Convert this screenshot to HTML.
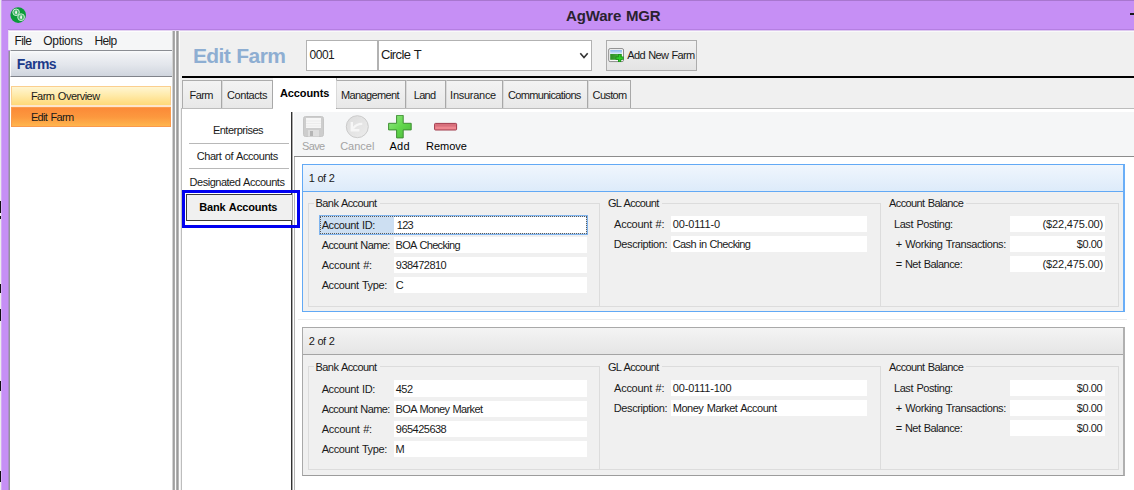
<!DOCTYPE html>
<html lang="en">
<head>
<meta charset="utf-8">
<title>AgWare MGR</title>
<style>
*{box-sizing:border-box;margin:0;padding:0}
html,body{width:1134px;height:490px;overflow:hidden;background:#fff}
body{font-family:"Liberation Sans",sans-serif;font-size:11px;color:#1a1a1a;position:relative}
.a{position:absolute;white-space:nowrap}
.t{position:absolute;white-space:nowrap}
#win{left:0;top:0;width:1134px;height:490px;background:#c68ff5}
#wtop{left:0;top:0;width:1134px;height:1px;background:#a876cf}
#wleft{left:0;top:0;width:2px;height:490px;background:linear-gradient(90deg,#ececec 50%,#d3aaf6 50%)}
#tbot{left:8px;top:29px;width:1126px;height:1px;background:#b57fe2}
#min{left:1130px;top:13px;width:4px;height:2px;background:#1a1a1a}
#lp{left:8px;top:51px;width:165px;height:439px;background:#fff;border-left:1px solid #ab8ccb}
#lpb{left:9px;top:51px;width:1px;height:439px;background:#94949a}
#menu{left:8px;top:30px;width:165px;height:20px;background:#f5f6f7;border-top:1px solid #e3d2f2;border-left:1px solid #e9def3}
#menu2{left:9px;top:31px;width:164px;height:1px;background:#fdfdfd}
#fh{left:10px;top:50px;width:163px;height:27px;border-top:1px solid #8a8d93;border-bottom:1px solid #80838a;border-left:1px solid #fbfbfc;background:linear-gradient(#fafbfc,#f0f2f5 12%,#e3e6ec 55%,#d0d5de)}
.nav{left:11px;width:160px}
#n1{top:86px;height:20px;border:1px solid #fbcf8e;background:linear-gradient(#fff6d2,#ffe9a6 50%,#ffd978)}
#n1b{left:11px;top:105px;width:160px;height:2px;background:#fde6cc}
#n2{top:107px;height:20px;border:1px solid #fb9a4c;background:linear-gradient(#fb8a38,#fc983e 50%,#ffb54e)}
#sp{left:172px;top:30px;border-top:1px solid #e3d2f2;width:8px;height:460px;background:#fcfcfc}
#sp1{left:172px;top:31px;width:3px;height:460px;background:linear-gradient(90deg,#d2d2d2 33.3%,#a0a0a0 33.3%,#a0a0a0 66.6%,#ababab 66.6%)}
#sp2{left:176px;top:31px;width:3px;height:460px;background:linear-gradient(90deg,#b0b0b0 33.3%,#9a9a9a 33.3%,#9a9a9a 66.6%,#b8b8b8 66.6%)}
#rp{left:180px;top:30px;width:954px;height:460px;background:#f0f0f0;border-top:1px solid #ddc8f0}
#rp2{left:180px;top:31px;width:954px;height:1px;background:#f9f9f9}
.inp{top:40px;height:31px;background:#fff;border:1px solid #b2b2b2}
#bl{left:182px;top:76px;width:952px;height:2px;background:#000}
.tab{top:80px;height:28px;border-top:1px solid #acacac;border-right:1px solid #a8a8a8;border-left:1px solid #dadada;background:linear-gradient(#f3f3f3,#e8e8e8)}
#tabline{left:181px;top:108px;width:953px;height:1px;background:#bcbcbc}
#tsel{left:273px;top:78px;width:64px;height:31px;background:#fff;border-right:1px solid #acacac}
#page{left:181px;top:109px;width:953px;height:381px;background:#fff;border-left:1px solid #bdbdbd}
#vl1{left:291px;top:112px;width:1px;height:378px;background:#333}
#vl1b{left:292px;top:112px;width:1px;height:378px;background:#a9a9a9}
#vl2{left:294px;top:157px;width:1px;height:333px;background:#b5b5b5}
#tbar{left:294px;top:112px;width:840px;height:44px;background:#f5f6f7}
#tbl{left:294px;top:156px;width:840px;height:1px;background:#8c8c8c}
.sep{left:189px;width:100px;height:1px;background:#b8b8b8}
.card{left:302px;width:823px;height:148px;background:#f0f0f0}
.ch{left:0;top:0;width:100%;height:27px}
.f{height:16px;background:#fff}
</style>
</head>
<body>
<div class="a" id="win"></div>
<div class="a" id="wtop"></div>
<div class="a" id="wleft"></div>
<div class="a" style="left:0;top:201px;width:1px;height:12px;background:#111"></div>
<div class="a" style="left:0;top:216px;width:1px;height:3px;background:#111"></div>
<div class="a" style="left:0;top:284px;width:1px;height:9px;background:#111"></div>
<div class="a" style="left:0;top:309px;width:1px;height:12px;background:#111"></div>
<div class="a" style="left:0;top:381px;width:1px;height:10px;background:#111"></div>
<div class="a" style="left:0;top:471px;width:1px;height:11px;background:#111"></div>

<div class="a" id="tbot"></div>
<svg class="a" style="left:10px;top:7px" width="17" height="17" viewBox="0 0 17 17">
<circle cx="8.2" cy="8.1" r="7.8" fill="#0b9a3a"/>
<circle cx="6.1" cy="5.3" r="3.3" fill="#49b76d" stroke="#d5efdd" stroke-width="0.9"/>
<circle cx="11.1" cy="10.2" r="3.4" fill="#49b76d" stroke="#d5efdd" stroke-width="0.9"/>
<ellipse cx="6.1" cy="5.3" rx="0.9" ry="1.9" fill="#f2faf4"/>
<ellipse cx="11.1" cy="10.2" rx="0.9" ry="1.9" fill="#f2faf4"/>
</svg>
<div class="a" id="min"></div>

<div class="a" id="menu"></div>
<div class="a" id="menu2"></div>
<div class="a" id="lp"></div>
<div class="a" id="lpb"></div>
<div class="a" id="fh"></div>
<div class="a nav" id="n1"></div>
<div class="a" id="n1b"></div>
<div class="a nav" id="n2"></div>

<div class="a" id="sp"></div>
<div class="a" id="sp1"></div>
<div class="a" id="sp2"></div>

<div class="a" id="rp"></div>
<div class="a" id="rp2"></div>
<div class="a inp" style="left:306px;width:72px"></div>
<div class="a inp" style="left:378px;width:214px"></div>
<svg class="a" style="left:579px;top:52px" width="10" height="8" viewBox="0 0 10 8"><path d="M1.3 1.3 L5 5.6 L8.7 1.3" fill="none" stroke="#333" stroke-width="1.6"/></svg>
<div class="a" style="left:606px;top:40px;width:91px;height:31px;border:1px solid #acacac;background:linear-gradient(#f1f1f1,#e4e4e4)"></div>
<svg class="a" style="left:608px;top:48px" width="18" height="16" viewBox="0 0 18 16">
<defs><linearGradient id="sk" x1="0" y1="0" x2="0" y2="1"><stop offset="0" stop-color="#7fb2ea"/><stop offset="1" stop-color="#e4f2fb"/></linearGradient>
<linearGradient id="gr" x1="0" y1="0" x2="1" y2="0"><stop offset="0" stop-color="#2a8f24"/><stop offset="1" stop-color="#55b548"/></linearGradient></defs>
<rect x="0.7" y="0.6" width="14.8" height="13" rx="1.4" fill="#f7f7f7" stroke="#8a8a8a"/>
<rect x="2.2" y="2.1" width="11.8" height="4" fill="url(#sk)"/>
<rect x="2.2" y="6" width="11.8" height="5.8" fill="url(#gr)"/>
<path d="M7.6 10.2h8M11.6 6.3v7.8" stroke="#128a12" stroke-width="3.2"/>
<path d="M8.3 10.2h6.6M11.6 7v6.4" stroke="#2fcb2a" stroke-width="1.8"/>
</svg>
<div class="a" id="bl"></div>

<div class="a" id="page"></div>
<div class="a" id="tabline"></div>
<div class="a tab" style="left:182px;width:40px;border-left-color:#acacac"></div>
<div class="a tab" style="left:222px;width:51px"></div>
<div class="a" id="tsel"></div>
<div class="a tab" style="left:336px;width:70px"></div>
<div class="a tab" style="left:406px;width:40px"></div>
<div class="a tab" style="left:446px;width:57px"></div>
<div class="a tab" style="left:503px;width:85px"></div>
<div class="a tab" style="left:588px;width:43px"></div>

<div class="a" id="tbar"></div>
<div class="a" id="tbl"></div>
<div class="a" id="vl1"></div>
<div class="a" id="vl1b"></div>
<div class="a" id="vl2"></div>

<div class="a sep" style="top:143px"></div>
<div class="a sep" style="top:168px"></div>
<div class="a" style="left:186px;top:194px;width:106px;height:27px;background:#f0f0f0;border:1px solid #3c3c3c;border-right:none"></div>
<div class="a" style="left:182px;top:190px;width:118px;height:38px;border:3px solid #0000f0"></div>

<svg class="a" style="left:303px;top:116px" width="21" height="22" viewBox="0 0 21 22">
<rect x="0.5" y="0.5" width="20" height="20" rx="2" fill="#cdcdcd" stroke="#c6c6c6"/>
<rect x="3" y="2" width="15" height="10" fill="#f6f6f6"/>
<path d="M3 5h15M3 7.5h15M3 10h15" stroke="#ececec" stroke-width="1"/>
<rect x="5" y="14" width="11" height="6.5" fill="#dedede"/>
<rect x="7" y="15" width="3" height="5" fill="#b5b5b5"/>
</svg>
<svg class="a" style="left:345px;top:115px" width="24" height="24" viewBox="0 0 24 24">
<defs><linearGradient id="cg" x1="0" y1="0" x2="1" y2="1"><stop offset="0" stop-color="#dcdcdc"/><stop offset="1" stop-color="#ececec"/></linearGradient></defs>
<circle cx="12.3" cy="11.7" r="11" fill="url(#cg)" stroke="#cbcbcb"/>
<path d="M6.8 7v8.3h7.6" fill="none" stroke="#f6f6f6" stroke-width="2.4"/>
<path d="M8 13.5c2.5-3.2 5.5-4.8 9.3-4.6" fill="none" stroke="#f6f6f6" stroke-width="2.2"/>
</svg>
<svg class="a" style="left:388px;top:115px" width="24" height="24" viewBox="0 0 24 24">
<defs><linearGradient id="ag" x1="0" y1="0" x2="1" y2="1"><stop offset="0" stop-color="#9be88c"/><stop offset="0.5" stop-color="#62d84c"/><stop offset="1" stop-color="#4cb63c"/></linearGradient></defs>
<path transform="translate(-0.1,-0.4)" d="M8.7 0.7h6.6v8h8v6.6h-8v8h-6.6v-8h-8v-6.6h8z" fill="url(#ag)" stroke="#3f8f34" stroke-width="1" stroke-linejoin="round"/>
</svg>
<svg class="a" style="left:434px;top:122px" width="24" height="10" viewBox="0 0 24 10">
<rect x="0.6" y="1.4" width="22" height="6.6" rx="0.8" fill="#ee8790" stroke="#a03a4c"/>
<rect x="1.2" y="2" width="20.8" height="2.6" fill="#d8707c"/>
</svg>

<div class="a" style="left:298px;top:319px;width:829px;height:1px;background:#ececec"></div>

<div class="a card" style="top:164px;border:1px solid #62a9f5;border-right:2px solid #6aaef7">
 <div class="a ch" style="background:linear-gradient(#f0f6fd,#ddebfa);border-bottom:1px solid #62a9f5"></div>
</div>
<div class="a" style="left:308px;top:203px;width:6px;height:1px;background:#dcdcdc"></div>
<div class="a" style="left:380px;top:203px;width:220px;height:1px;background:#dcdcdc"></div>
<div class="a" style="left:308px;top:203px;width:1px;height:103px;background:#dcdcdc"></div>
<div class="a" style="left:599px;top:203px;width:1px;height:103px;background:#dcdcdc"></div>
<div class="a" style="left:662px;top:203px;width:218px;height:1px;background:#dcdcdc"></div>
<div class="a" style="left:880px;top:203px;width:1px;height:103px;background:#dcdcdc"></div>
<div class="a" style="left:966px;top:203px;width:153px;height:1px;background:#dcdcdc"></div>
<div class="a" style="left:1118px;top:203px;width:1px;height:104px;background:#dcdcdc"></div>
<div class="a" style="left:308px;top:306px;width:811px;height:1px;background:#dcdcdc"></div>
<div class="a" style="left:319px;top:215px;width:269px;height:20px;border:1px solid #7fb4ee;background:#cddff2"></div>
<div class="a f" style="left:394px;top:217px;width:192px;height:16px"></div>
<div class="a" style="left:320px;top:216px;width:267px;height:18px;border:1px dotted #5a5a5a"></div>
<div class="a f" style="left:394px;top:237px;width:193px"></div>
<div class="a f" style="left:394px;top:257px;width:193px"></div>
<div class="a f" style="left:394px;top:277px;width:193px"></div>
<div class="a f" style="left:671px;top:216px;width:196px"></div>
<div class="a f" style="left:671px;top:236px;width:196px"></div>
<div class="a f" style="left:1010px;top:216px;width:95px"></div>
<div class="a f" style="left:1010px;top:236px;width:95px"></div>
<div class="a f" style="left:1010px;top:256px;width:95px"></div>
<div class="a card" style="top:327px;height:149px;border:1px solid #a9a9a9;border-right:2px solid #b0b0b0;border-bottom-color:#9c9c9c">
 <div class="a ch" style="background:linear-gradient(#f4f4f4,#e5e5e5);border-bottom:1px solid #a4a4a4"></div>
</div>
<div class="a" style="left:308px;top:366px;width:6px;height:1px;background:#dcdcdc"></div>
<div class="a" style="left:380px;top:366px;width:220px;height:1px;background:#dcdcdc"></div>
<div class="a" style="left:308px;top:366px;width:1px;height:103px;background:#dcdcdc"></div>
<div class="a" style="left:599px;top:366px;width:1px;height:103px;background:#dcdcdc"></div>
<div class="a" style="left:662px;top:366px;width:218px;height:1px;background:#dcdcdc"></div>
<div class="a" style="left:880px;top:366px;width:1px;height:103px;background:#dcdcdc"></div>
<div class="a" style="left:966px;top:366px;width:153px;height:1px;background:#dcdcdc"></div>
<div class="a" style="left:1118px;top:366px;width:1px;height:104px;background:#dcdcdc"></div>
<div class="a" style="left:308px;top:469px;width:811px;height:1px;background:#dcdcdc"></div>
<div class="a f" style="left:394px;top:380px;width:193px;height:17px"></div>
<div class="a f" style="left:394px;top:401px;width:193px"></div>
<div class="a f" style="left:394px;top:421px;width:193px"></div>
<div class="a f" style="left:394px;top:441px;width:193px"></div>
<div class="a f" style="left:671px;top:380px;width:196px"></div>
<div class="a f" style="left:671px;top:400px;width:196px"></div>
<div class="a f" style="left:1010px;top:380px;width:95px"></div>
<div class="a f" style="left:1010px;top:400px;width:95px"></div>
<div class="a f" style="left:1010px;top:420px;width:95px"></div>
<div class="t" style="left:14.60px;top:34px;font-size:12px;line-height:15px;height:15px;letter-spacing:-0.65px;color:#1a1a1a">File</div>
<div class="t" style="left:43.20px;top:34px;font-size:12px;line-height:15px;height:15px;letter-spacing:-0.28px;color:#1a1a1a">Options</div>
<div class="t" style="left:94.40px;top:34px;font-size:12px;line-height:15px;height:15px;letter-spacing:-0.65px;color:#1a1a1a">Help</div>
<div class="t" style="left:16.80px;top:54px;font-size:14px;line-height:20px;height:20px;letter-spacing:-0.56px;color:#1c3a8a;font-weight:bold">Farms</div>
<div class="t" style="left:30.90px;top:89px;font-size:11px;line-height:14px;height:14px;letter-spacing:-0.51px;color:#1a1a1a;word-spacing:0.8px">Farm Overview</div>
<div class="t" style="left:30.90px;top:110px;font-size:11px;line-height:14px;height:14px;letter-spacing:-0.65px;color:#1a1a1a;word-spacing:0.8px">Edit Farm</div>
<div class="t" style="left:566.10px;top:6px;font-size:15px;line-height:20px;height:20px;letter-spacing:-0.17px;color:#2a2230;word-spacing:0.8px;font-weight:bold">AgWare MGR</div>
<div class="t" style="left:192.90px;top:43px;font-size:21px;line-height:26px;height:26px;letter-spacing:-0.58px;color:#8eaed2;word-spacing:0.8px;font-weight:bold">Edit Farm</div>
<div class="t" style="left:309.60px;top:48px;font-size:12px;line-height:14px;height:14px;letter-spacing:-0.51px;color:#1a1a1a">0001</div>
<div class="t" style="left:380.90px;top:47px;font-size:13px;line-height:16px;height:16px;letter-spacing:-0.65px;color:#1a1a1a;word-spacing:0.8px">Circle T</div>
<div class="t" style="left:627.30px;top:48px;font-size:11px;line-height:14px;height:14px;letter-spacing:-0.65px;color:#1a1a1a;word-spacing:0.8px">Add New Farm</div>
<div class="t" style="left:189.60px;top:88px;font-size:11px;line-height:14px;height:14px;letter-spacing:-0.65px;color:#1a1a1a">Farm</div>
<div class="t" style="left:227.00px;top:88px;font-size:11px;line-height:14px;height:14px;letter-spacing:-0.43px;color:#1a1a1a">Contacts</div>
<div class="t" style="left:279.90px;top:86px;font-size:11px;line-height:14px;height:14px;letter-spacing:-0.09px;color:#000;font-weight:bold">Accounts</div>
<div class="t" style="left:340.90px;top:88px;font-size:11px;line-height:14px;height:14px;letter-spacing:-0.61px;color:#1a1a1a">Management</div>
<div class="t" style="left:413.70px;top:88px;font-size:11px;line-height:14px;height:14px;letter-spacing:-0.65px;color:#1a1a1a">Land</div>
<div class="t" style="left:450.10px;top:88px;font-size:11px;line-height:14px;height:14px;letter-spacing:-0.27px;color:#1a1a1a">Insurance</div>
<div class="t" style="left:507.90px;top:88px;font-size:11px;line-height:14px;height:14px;letter-spacing:-0.65px;color:#1a1a1a">Communications</div>
<div class="t" style="left:592.60px;top:88px;font-size:11px;line-height:14px;height:14px;letter-spacing:-0.65px;color:#1a1a1a">Custom</div>
<div class="t" style="left:212.90px;top:123px;font-size:11px;line-height:14px;height:14px;letter-spacing:-0.49px;color:#1a1a1a">Enterprises</div>
<div class="t" style="left:196.70px;top:149px;font-size:11px;line-height:14px;height:14px;letter-spacing:-0.43px;color:#1a1a1a;word-spacing:0.8px">Chart of Accounts</div>
<div class="t" style="left:189.60px;top:175px;font-size:11px;line-height:14px;height:14px;letter-spacing:-0.49px;color:#1a1a1a;word-spacing:0.8px">Designated Accounts</div>
<div class="t" style="left:199.20px;top:200px;font-size:11px;line-height:14px;height:14px;letter-spacing:-0.18px;color:#000;word-spacing:0.8px;font-weight:bold">Bank Accounts</div>
<div class="t" style="left:302.10px;top:139px;font-size:11px;line-height:14px;height:14px;letter-spacing:-0.65px;color:#a3a3a3">Save</div>
<div class="t" style="left:340.20px;top:139px;font-size:11px;line-height:14px;height:14px;letter-spacing:-0.02px;color:#a3a3a3">Cancel</div>
<div class="t" style="left:389.40px;top:139px;font-size:11px;line-height:14px;height:14px;letter-spacing:0.30px;color:#000">Add</div>
<div class="t" style="left:426.00px;top:139px;font-size:11px;line-height:14px;height:14px;letter-spacing:-0.03px;color:#000">Remove</div>
<div class="t" style="left:308.80px;top:171px;font-size:11px;line-height:14px;height:14px;letter-spacing:-0.60px;color:#1a1a1a;word-spacing:0.8px">1 of 2</div>
<div class="t" style="left:315.60px;top:196px;font-size:11px;line-height:14px;height:14px;letter-spacing:-0.59px;color:#1a1a1a;word-spacing:0.8px">Bank Account</div>
<div class="t" style="left:607.90px;top:196px;font-size:11px;line-height:14px;height:14px;letter-spacing:-0.65px;color:#1a1a1a;word-spacing:0.8px">GL Account</div>
<div class="t" style="left:889.10px;top:196px;font-size:11px;line-height:14px;height:14px;letter-spacing:-0.62px;color:#1a1a1a;word-spacing:0.8px">Account Balance</div>
<div class="t" style="left:321.70px;top:218px;font-size:11px;line-height:14px;height:14px;letter-spacing:-0.41px;color:#1a1a1a;word-spacing:0.8px">Account ID:</div>
<div class="t" style="left:321.70px;top:238px;font-size:11px;line-height:14px;height:14px;letter-spacing:-0.62px;color:#1a1a1a;word-spacing:0.8px">Account Name:</div>
<div class="t" style="left:321.70px;top:258px;font-size:11px;line-height:14px;height:14px;letter-spacing:-0.27px;color:#1a1a1a;word-spacing:0.8px">Account #:</div>
<div class="t" style="left:321.70px;top:278px;font-size:11px;line-height:14px;height:14px;letter-spacing:-0.40px;color:#1a1a1a;word-spacing:0.8px">Account Type:</div>
<div class="t" style="left:396.70px;top:218px;font-size:11px;line-height:14px;height:14px;letter-spacing:-0.65px;color:#1a1a1a">123</div>
<div class="t" style="left:395.50px;top:238px;font-size:11px;line-height:14px;height:14px;letter-spacing:-0.65px;color:#1a1a1a;word-spacing:0.8px">BOA Checking</div>
<div class="t" style="left:395.80px;top:258px;font-size:11px;line-height:14px;height:14px;letter-spacing:-0.52px;color:#1a1a1a">938472810</div>
<div class="t" style="left:395.80px;top:278px;font-size:11px;line-height:14px;height:14px;letter-spacing:0.00px;color:#1a1a1a">C</div>
<div class="t" style="left:614.10px;top:217px;font-size:11px;line-height:14px;height:14px;letter-spacing:-0.27px;color:#1a1a1a;word-spacing:0.8px">Account #:</div>
<div class="t" style="left:613.80px;top:237px;font-size:11px;line-height:14px;height:14px;letter-spacing:-0.40px;color:#1a1a1a">Description:</div>
<div class="t" style="left:672.80px;top:217px;font-size:11px;line-height:14px;height:14px;letter-spacing:-0.16px;color:#1a1a1a">00-0111-0</div>
<div class="t" style="left:672.80px;top:237px;font-size:11px;line-height:14px;height:14px;letter-spacing:-0.65px;color:#1a1a1a;word-spacing:0.8px">Cash in Checking</div>
<div class="t" style="left:894.00px;top:217px;font-size:11px;line-height:14px;height:14px;letter-spacing:-0.44px;color:#1a1a1a;word-spacing:0.8px">Last Posting:</div>
<div class="t" style="left:895.80px;top:237px;font-size:11px;line-height:14px;height:14px;letter-spacing:-0.42px;color:#1a1a1a;word-spacing:0.8px">+ Working Transactions:</div>
<div class="t" style="left:895.80px;top:257px;font-size:11px;line-height:14px;height:14px;letter-spacing:-0.55px;color:#1a1a1a;word-spacing:0.8px">= Net Balance:</div>
<div class="t" style="left:1042.50px;top:217px;font-size:11px;line-height:14px;height:14px;letter-spacing:-0.15px;color:#1a1a1a">($22,475.00)</div>
<div class="t" style="left:1076.70px;top:237px;font-size:11px;line-height:14px;height:14px;letter-spacing:-0.38px;color:#1a1a1a">$0.00</div>
<div class="t" style="left:1042.50px;top:257px;font-size:11px;line-height:14px;height:14px;letter-spacing:-0.15px;color:#1a1a1a">($22,475.00)</div>
<div class="t" style="left:308.80px;top:334px;font-size:11px;line-height:14px;height:14px;letter-spacing:-0.60px;color:#1a1a1a;word-spacing:0.8px">2 of 2</div>
<div class="t" style="left:315.60px;top:360px;font-size:11px;line-height:14px;height:14px;letter-spacing:-0.59px;color:#1a1a1a;word-spacing:0.8px">Bank Account</div>
<div class="t" style="left:607.90px;top:360px;font-size:11px;line-height:14px;height:14px;letter-spacing:-0.65px;color:#1a1a1a;word-spacing:0.8px">GL Account</div>
<div class="t" style="left:889.10px;top:360px;font-size:11px;line-height:14px;height:14px;letter-spacing:-0.62px;color:#1a1a1a;word-spacing:0.8px">Account Balance</div>
<div class="t" style="left:321.70px;top:382px;font-size:11px;line-height:14px;height:14px;letter-spacing:-0.41px;color:#1a1a1a;word-spacing:0.8px">Account ID:</div>
<div class="t" style="left:321.70px;top:402px;font-size:11px;line-height:14px;height:14px;letter-spacing:-0.62px;color:#1a1a1a;word-spacing:0.8px">Account Name:</div>
<div class="t" style="left:321.70px;top:422px;font-size:11px;line-height:14px;height:14px;letter-spacing:-0.27px;color:#1a1a1a;word-spacing:0.8px">Account #:</div>
<div class="t" style="left:321.70px;top:442px;font-size:11px;line-height:14px;height:14px;letter-spacing:-0.40px;color:#1a1a1a;word-spacing:0.8px">Account Type:</div>
<div class="t" style="left:395.80px;top:382px;font-size:11px;line-height:14px;height:14px;letter-spacing:-0.57px;color:#1a1a1a">452</div>
<div class="t" style="left:395.50px;top:402px;font-size:11px;line-height:14px;height:14px;letter-spacing:-0.63px;color:#1a1a1a;word-spacing:0.8px">BOA Money Market</div>
<div class="t" style="left:395.80px;top:422px;font-size:11px;line-height:14px;height:14px;letter-spacing:-0.52px;color:#1a1a1a">965425638</div>
<div class="t" style="left:395.50px;top:442px;font-size:11px;line-height:14px;height:14px;letter-spacing:0.00px;color:#1a1a1a">M</div>
<div class="t" style="left:614.10px;top:381px;font-size:11px;line-height:14px;height:14px;letter-spacing:-0.27px;color:#1a1a1a;word-spacing:0.8px">Account #:</div>
<div class="t" style="left:613.80px;top:401px;font-size:11px;line-height:14px;height:14px;letter-spacing:-0.40px;color:#1a1a1a">Description:</div>
<div class="t" style="left:672.80px;top:381px;font-size:11px;line-height:14px;height:14px;letter-spacing:-0.19px;color:#1a1a1a">00-0111-100</div>
<div class="t" style="left:672.80px;top:401px;font-size:11px;line-height:14px;height:14px;letter-spacing:-0.49px;color:#1a1a1a;word-spacing:0.8px">Money Market Account</div>
<div class="t" style="left:894.00px;top:381px;font-size:11px;line-height:14px;height:14px;letter-spacing:-0.44px;color:#1a1a1a;word-spacing:0.8px">Last Posting:</div>
<div class="t" style="left:895.80px;top:401px;font-size:11px;line-height:14px;height:14px;letter-spacing:-0.42px;color:#1a1a1a;word-spacing:0.8px">+ Working Transactions:</div>
<div class="t" style="left:895.80px;top:421px;font-size:11px;line-height:14px;height:14px;letter-spacing:-0.55px;color:#1a1a1a;word-spacing:0.8px">= Net Balance:</div>
<div class="t" style="left:1076.70px;top:381px;font-size:11px;line-height:14px;height:14px;letter-spacing:-0.38px;color:#1a1a1a">$0.00</div>
<div class="t" style="left:1076.70px;top:401px;font-size:11px;line-height:14px;height:14px;letter-spacing:-0.38px;color:#1a1a1a">$0.00</div>
<div class="t" style="left:1076.70px;top:421px;font-size:11px;line-height:14px;height:14px;letter-spacing:-0.38px;color:#1a1a1a">$0.00</div>
</body>
</html>
